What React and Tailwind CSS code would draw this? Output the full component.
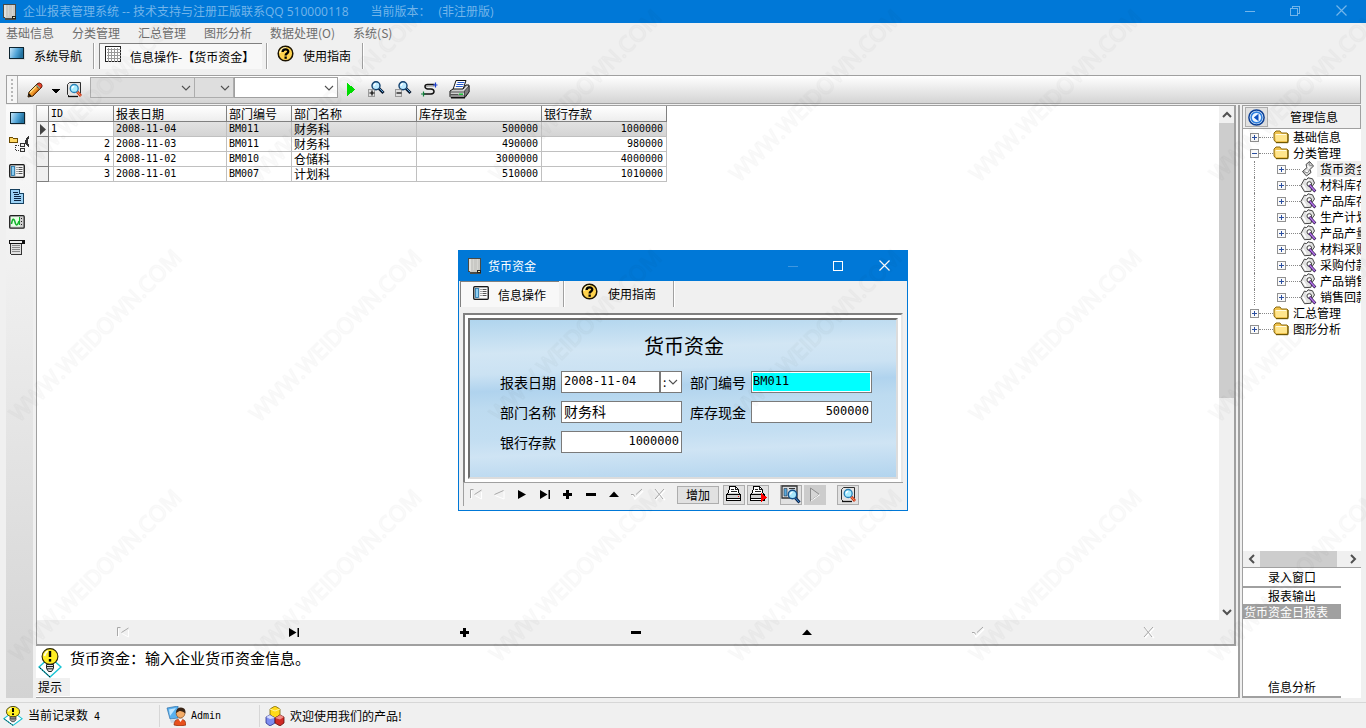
import React from "react";

const Svg = ({ w = 16, h = 16, children, crisp = true }) => (
  <svg width={w} height={h} viewBox={`0 0 ${w} ${h}`} className="block shrink-0" aria-hidden="true" shapeRendering={crisp ? "crispEdges" : "auto"}>
    {children}
  </svg>
);

const BookIcon = () => (
  <Svg>
    <path d="M1 0h13v16H3v-2H1z" fill="#4a4a44" />
    <path d="M2 1h11v11h-1v2H3z" fill="#c9c9c5" />
    <path d="M2 1h2v12H2z" fill="#e0e0dc" />
    <path d="M6 1h1v11H6zM10 1h1v11h-1z" fill="#d5d5d1" />
    <path d="M10 12h4v3h-4z" fill="#222" />
    <path d="M11 13h2v1h-2z" fill="#e8e2b0" />
  </Svg>
);

const ScreenIcon = () => (
  <Svg w={16} h={13}>
    <defs>
      <linearGradient id="scr" x1="0" y1="0" x2="1" y2="0.3">
        <stop offset="0" stopColor="#c5e6fa" />
        <stop offset="0.6" stopColor="#4fa3d6" />
        <stop offset="1" stopColor="#23729f" />
      </linearGradient>
    </defs>
    <rect width="15" height="12" fill="#0d2430" />
    <rect x="1" y="1" width="13" height="10" fill="url(#scr)" />
    <path d="M15 1h1v12H1v-1h14z" fill="#dcdcdc" />
  </Svg>
);

const GridIcon = () => (
  <Svg w={17} h={17}>
    <rect width="16" height="16" fill="#222" />
    <rect x="1" y="1" width="14" height="14" fill="#fff" />
    <path d="M3 1v14M6 1v14M9 1v14M12 1v14M1 3h14M1 6h14M1 9h14M1 12h14" transform="translate(.5 .5)" stroke="#999" />
  </Svg>
);

const HelpIcon = () => (
  <Svg w={17} h={17} crisp={false}>
    <circle cx="8.500" cy="8.500" r="7.300" fill="#ffd34d" stroke="#1a1200" strokeWidth="1.500" />
    <path d="M3 8a5.500 5.500 0 0 1 6-5" stroke="#fff3b8" strokeWidth="1.600" fill="none" />
    <path d="M5.600 7C5.600 3.500 11.400 3.500 11.300 6.600 11.300 8.600 8.600 8.400 8.600 10.400" fill="none" stroke="#000" strokeWidth="2.300" />
    <rect x="7.500" y="11.500" width="2.300" height="2.300" fill="#000" />
  </Svg>
);

const PencilIcon = () => (
  <Svg crisp={false}>
    <path d="M1 15l1-5 8-8q2-2 4 0t0 4l-8 8z" fill="#f29c2c" stroke="#2a1600" />
    <path d="M3 10.500l7-7" stroke="#ffe08a" strokeWidth="1.500" />
    <path d="M6 13l7-7" stroke="#b85e10" strokeWidth="1.200" />
    <circle cx="12.400" cy="3.700" r="2.600" fill="#e8432b" stroke="#5a1208" strokeWidth=".6" />
    <path d="M9.500 3l3.500 3.500" stroke="#7fb08a" strokeWidth="1.200" />
    <path d="M1.500 14.500l.7-3 2.300 2.300z" fill="#111" />
  </Svg>
);

const PreviewIcon = () => (
  <Svg crisp={false}>
    <path d="M3.500 .5h11v11M3.500 .5l-2 2v10l2 2h8" fill="none" stroke="#2d2d2d" />
    <path d="M3.500 1h10.500v12H4l-2-2V2.500z" fill="#e4e4e4" />
    <path d="M2 14.500h10" stroke="#111" strokeWidth="1.300" />
    <path d="M11 9.500l4 4.500" stroke="#c8391d" strokeWidth="2.800" />
    <path d="M11 9.500l3.500 4" stroke="#ff9d60" strokeWidth="1" />
    <circle cx="8.200" cy="6.500" r="4" fill="#a8ecff" stroke="#2882b8" strokeWidth="1.300" />
    <path d="M6.200 6.500q0-2 2-2.300" stroke="#fff" strokeWidth="1.400" fill="none" />
  </Svg>
);

const ZoomGlass = ({ plus }) => (
  <Svg w={17} h={17} crisp={false}>
    <path d="M10.500 7l5 5" stroke="#0b1c33" strokeWidth="3" />
    <path d="M11 7l4 4" stroke="#5aa6e0" strokeWidth="1" />
    <circle cx="8" cy="4.800" r="4" fill="#bdeaff" stroke="#12406e" strokeWidth="1.400" />
    <path d="M6 5q0-2 2-2.300" stroke="#fff" strokeWidth="1.300" fill="none" />
    <path d="M.5 8.500h6v7h-6z" fill="#ddd" stroke="#555" strokeDasharray="1 1" />
    <path d={plus ? "M1.500 12h5M4 9.500v5" : "M1.500 12h5"} stroke="#000" strokeWidth="1.200" />
  </Svg>
);

const RouteIcon = () => (
  <Svg w={17} h={16} crisp={false}>
    <path d="M13.500 2.500H6.500q-2.500 0-2.500 2t2.500 2.500h3.500q3 .3 3 2.500t-3 2.500H3" fill="none" stroke="#111" strokeWidth="1.500" />
    <path d="M13.500 4H7q-1.500 0-1.500 1" fill="none" stroke="#888" />
    <path d="M14.500 .5v5M12 3h4.500" stroke="#1a3ed0" strokeWidth="1.200" />
    <path d="M2.500 9.500v5M0 12h4.500" stroke="#12803c" strokeWidth="1.200" />
  </Svg>
);

const BigPrinter = () => (
  <Svg w={21} h={19} crisp={false}>
    <path d="M7 .5h10l-3 9H4z" fill="#fff" stroke="#111" />
    <path d="M8.500 2.500h7M7.500 4.500h7M6.800 6.500h7" stroke="#2458c8" strokeWidth="1.200" />
    <path d="M1 11l3-2h10l3-4h3v7l-4 5.500H2l-1-1z" fill="#d0d0d0" stroke="#111" />
    <path d="M15.500 11l4.500-5v6l-4.500 5z" fill="#7c7c7c" stroke="#111" strokeWidth=".6" />
    <path d="M1.500 12h14M1.500 14.500h8M1.500 16h14" stroke="#333" strokeWidth=".8" />
    <path d="M2 17.800h14" stroke="#111" strokeWidth="1.400" />
    <rect x="10" y="13.500" width="4" height="1.500" fill="#19c236" />
  </Svg>
);

const SmallPrinter = ({ red }) => (
  <Svg w={18} h={17}>
    <path d="M4.500 .5h6l3 3v4h-10z" fill="#fff" stroke="#000" />
    <path d="M10.500 .5v3h3M5.500 3.500h3M5.500 5.500h6" fill="none" stroke="#222" />
    <path d="M3.500 6.500l-2 2v6h14v-6l-2-2" fill="#cfcfcf" stroke="#000" />
    <path d="M1.500 8.500h14M1.500 12.500h14" stroke="#000" />
    <path d="M2 13.500h13" stroke="#fff" />
    {red ? <path d="M12 7v9l6-4.500z" fill="#f00" /> : <rect x="13" y="10" width="1" height="1" fill="#f00" />}
  </Svg>
);

const FormZoom = () => (
  <Svg w={20} h={19} crisp={false}>
    <path d="M1 1h15v12H1z" fill="#d9dde0" stroke="#333" strokeWidth="1.300" />
    <path d="M3 3.500h3v7.500H3z" fill="#5aa8dc" stroke="#234" strokeWidth=".6" />
    <path d="M8 3.500h6" stroke="#333" />
    <path d="M14 12.500l4.500 5" stroke="#0b2750" strokeWidth="3" />
    <path d="M14.500 13l3.500 4" stroke="#3f8fd8" />
    <circle cx="11.500" cy="9.500" r="4.200" fill="#a6e6fb" stroke="#14508a" strokeWidth="1.400" />
    <path d="M9.500 9.500q0-2 2-2.300" stroke="#fff" strokeWidth="1.300" fill="none" />
  </Svg>
);

const TreeTool = () => (
  <Svg w={21} h={17}>
    <path d="M.5 1.500h3l1 1h4v4h-8z" fill="#ffd864" stroke="#6b4a00" />
    <path d="M6.500 8.500v6h4M6.500 9.500h4" fill="none" stroke="#333" strokeDasharray="1 1" />
    <path d="M11.500 7.500h4v3h-4zM11.500 12.500h4v3h-4z" fill="#eee" stroke="#333" />
    <path d="M20 0q-8 6 0 11v-2q-3-3 0-7z" fill="#333" />
  </Svg>
);

const FormTool = () => (
  <Svg w={17} h={14} crisp={false}>
    <rect x=".7" y=".7" width="14.600" height="12.600" rx="1" fill="#d8d8d8" stroke="#1a1a1a" strokeWidth="1.300" />
    <rect x="2.500" y="2.500" width="3" height="9" fill="#8fd0f4" stroke="#1f6fa5" strokeWidth=".8" />
    <path d="M7 2v10h7V2z" fill="#fafafa" />
    <path d="M7.500 3.500h1M9.500 3.500h4M7.500 5.500h1M9.500 5.500h4M7.500 7.500h1M9.500 7.500h4M7.500 9.500h1M9.500 9.500h4" stroke="#555" />
  </Svg>
);

const DocTool = () => (
  <Svg w={15} h={15}>
    <path d="M.5 .5h9l4 4v10H.5z" fill="#9cd2f6" stroke="#16405f" />
    <path d="M9.500 .5v4h4" fill="#e6f5ff" stroke="#16405f" />
    <path d="M2.500 3.500h5M3.500 5.500h5M3.500 7.500h7M3.500 9.500h7M3.500 11.500h7" stroke="#0c2340" />
  </Svg>
);

const ScopeTool = () => (
  <Svg w={16} h={14} crisp={false}>
    <rect x=".7" y=".7" width="14.500" height="12.500" rx="1" fill="#cfcfcf" stroke="#222" strokeWidth="1.300" />
    <rect x="2" y="2" width="9" height="9.500" fill="#e6ffe6" />
    <path d="M2.500 9c1-6 2.500-6 3.500-2s2.500 4 4-1" fill="none" stroke="#12b32b" strokeWidth="1.500" />
    <path d="M10.500 2v8" stroke="#12b32b" />
    <path d="M12.500 3v1M12.500 6v1M12.500 9v1" stroke="#222" />
  </Svg>
);

const ScrollTool = () => (
  <Svg w={16} h={16}>
    <rect x="0" y="0" width="16" height="4" fill="#111" />
    <rect x="1" y="1" width="12" height="2" fill="#eee" />
    <path d="M1 4h12v11H2v-1H1z" fill="#333" />
    <rect x="2" y="4" width="10" height="10" fill="#e0e0e0" />
    <path d="M3 5.500h8M3 7.500h8M3 9.500h8M3 11.500h8" stroke="#888" />
  </Svg>
);

const FolderIcon = () => (
  <Svg w={17} h={14} crisp={false}>
    <path d="M1 10V3l2-2h4l1.500 2H14l1 1v7l-1 1.500H3z" fill="#f0c24c" stroke="#8a6a10" />
    <path d="M2 5h12v6H3z" fill="#ffe58c" />
    <path d="M2.500 4.500h11" stroke="#fffbe0" />
    <path d="M3 12.700h12V4" stroke="#6b5400" fill="none" />
  </Svg>
);

const BookLeaf = () => (
  <Svg w={17} h={16} crisp={false}>
    <path d="M.8 8.500L4.500 2 6.500 2.800 8 .8l4.500 1L14.500 6 12 9.500l-1 4.800-6.500 .4z" fill="#e2e2e2" stroke="#333" strokeWidth=".9" />
    <path d="M3 8l3 5M6 4.500l3-2" stroke="#fff" strokeWidth="1.500" />
    <circle cx="9.300" cy="7" r="2.300" fill="#fff" stroke="#333" strokeWidth=".9" />
    <path d="M9.300 8l6 6.500" stroke="#2a1448" strokeWidth="2.800" />
    <path d="M9.700 8.300l5.200 5.700" stroke="#b673ec" strokeWidth="1.500" />
  </Svg>
);

const OpenLeaf = () => (
  <Svg w={17} h={16} crisp={false}>
    <path d="M2.500 10.500l4.500-4-1-3L9.500 .5l4 4.500-3.500 3.500 1 3-4.500 3.500z" fill="#dcdcdc" stroke="#333" strokeWidth=".9" />
    <path d="M7.500 5l2 2.500M5.500 10l3 .8" stroke="#fff" strokeWidth="1.400" />
    <path d="M3 10.500l4.500 1.300L10 8.500M9.500 1L9 4l4 1" stroke="#777" fill="none" strokeWidth=".8" />
  </Svg>
);

const BulbIcon = ({ w = 24, h = 30 }) => (
  <svg width={w} height={h} viewBox="0 0 24 30" preserveAspectRatio="none" className="block shrink-0" aria-hidden="true">
    <path d="M1 19l11-10 11 10-11 10z" fill="#fff" stroke="#18c4d4" strokeWidth="1.400" />
    <path d="M12 29L1 19" stroke="#111" strokeDasharray="2 1" />
    <circle cx="12" cy="8.500" r="7.900" fill="#ffee22" stroke="#2b2600" strokeWidth="1.100" />
    <path d="M6.500 8q1-4 3.500-5" stroke="#fffde0" strokeWidth="1.800" fill="none" />
    <path d="M12 3v6" stroke="#000" strokeWidth="2.400" />
    <rect x="10.800" y="11" width="2.400" height="2.600" fill="#000" />
    <path d="M8.500 16.500h7v4l-2 3h-3l-2-3z" fill="#dcdcdc" stroke="#222" />
    <path d="M8.500 18.500h7M9 20.800h6" stroke="#222" />
  </svg>
);

const UserIcon = () => (
  <Svg w={20} h={20} crisp={false}>
    <path d="M1 2l11-2v12l-8 1z" fill="#58b0ee" stroke="#2f6fa8" strokeWidth=".7" />
    <path d="M3 3.500l7-1.500-6 8z" fill="#bfe6ff" />
    <path d="M4 14l6-1 1 3-6 1z" fill="#c9d6e2" />
    <path d="M8 19q0-6 6-6t6 6q-6 2-12 0z" fill="#e8501c" stroke="#8a2c08" strokeWidth=".7" />
    <circle cx="14.500" cy="7.500" r="4.300" fill="#f3ac68" stroke="#8a4a18" strokeWidth=".7" />
    <path d="M10 7q0-5.500 5-5.500t4.500 6q-3-3-6-2.500z" fill="#3a2415" />
    <path d="M12.500 13l2 3 2-3z" fill="#fff" />
  </Svg>
);

const CubesIcon = () => (
  <Svg w={20} h={20} crisp={false}>
    <path d="M5 3l5-3 5 3v6l-5 3-5-3z" fill="#ffd91a" stroke="#7c6400" strokeWidth=".8" />
    <path d="M5 3l5 2 5-2" stroke="#fff3a0" fill="none" />
    <path d="M1 11l4-2 5 3v5l-5 3-4-3z" fill="#7d8df0" stroke="#2a2f88" strokeWidth=".8" />
    <path d="M1 11l4 2 5-1-5-3z" fill="#d5dafd" />
    <path d="M10 12l5-3 4 2v6l-4 3-5-3z" fill="#d02a26" stroke="#5e0c0a" strokeWidth=".8" />
    <path d="M10 12l5 1.500 4-2.500-4-2z" fill="#f28c84" />
  </Svg>
);

const BackIcon = () => (
  <Svg w={17} h={17} crisp={false}>
    <circle cx="8.500" cy="8.500" r="7.600" fill="#fff" stroke="#0b3f96" strokeWidth="1.500" />
    <circle cx="8.500" cy="8.500" r="5.400" fill="#eaf4ff" stroke="#2f80e0" strokeWidth="1.600" />
    <path d="M10.500 4.800v7.400L5.800 8.500z" fill="#0b4fc0" />
  </Svg>
);

const NavGlyph = ({ kind }) => {
  const light = "#a8a8a8";
  const shapes = {
    first: (
      <>
        <path d="M2.500 12V3.500M12.500 5v7L6 8.500" stroke="#fff" fill="none" />
        <path d="M1.500 11V2.500h3M5.500 7.500l7-4.500" stroke={light} fill="none" />
      </>
    ),
    prev: (
      <>
        <path d="M3 8.500l9 3.500V4.500" stroke="#fff" fill="none" />
        <path d="M2.500 7.500l9-4" stroke={light} fill="none" />
      </>
    ),
    next: <path d="M3 3l8 4.500L3 12z" fill="#000" />,
    last: <path d="M2 3l7.500 4.500L2 12zM10.500 3h1.500v9h-1.500z" fill="#000" />,
    add: <path d="M5 3h3v3h3v3H8v3H5V9H2V6h3z" fill="#000" />,
    del: <path d="M2 6h10v3H2z" fill="#000" />,
    edit: <path d="M2 10l5-5.500L12 10z" fill="#000" />,
    post: (
      <>
        <path d="M2 8.500l1-1 2 4.500 8-8" stroke="#fff" fill="none" strokeWidth="1.500" />
        <path d="M1 7.500h2.500l1 2M6 7.500l6-5.500" stroke={light} fill="none" />
      </>
    ),
    cancel: (
      <>
        <path d="M3 3l9 10M12 3l-9 10" stroke="#fff" fill="none" strokeWidth="1.500" />
        <path d="M2 2l8 10M11 2L2 12" stroke={light} fill="none" />
      </>
    ),
  };
  return <Svg w={14} h={15} crisp={["add", "del"].includes(kind)}>{shapes[kind]}</Svg>;
};

const NAV_LABELS = {
  first: "第一条", prev: "上一条", next: "下一条", last: "最后一条", add: "插入",
  del: "删除", edit: "编辑", post: "保存", cancel: "取消",
};

const Chevron = ({ dir = "down", color = "#505050", heavy }) => {
  const d = { down: "M1 3l4 4 4-4", up: "M1 7l4-4 4 4", left: "M7 1L3 5l4 4", right: "M3 1l4 4-4 4" }[dir];
  return (
    <Svg w={10} h={10} crisp={false}>
      <path d={d} fill="none" stroke={color} strokeWidth={heavy ? 2 : 1.1} />
    </Svg>
  );
};

const Combo = ({ label, className }) => (
  <div className={`relative flex h-[21px] items-center border ${className}`}>
    <select aria-label={label} className="h-full w-full appearance-none bg-transparent outline-none" />
    <span className="pointer-events-none absolute right-[3px]">
      <Chevron />
    </span>
  </div>
);

const IconButton = ({ label, className = "", children }) => (
  <button type="button" aria-label={label} className={`flex shrink-0 items-center justify-center ${className}`}>
    {children}
  </button>
);

const Sep = () => <div className="h-full w-[2px] shrink-0 border-l border-[#a0a0a0] bg-white" />;

const MENU = ["基础信息", "分类管理", "汇总管理", "图形分析", "数据处理(O)", "系统(S)"];

const ROWS = [
  ["1", "2008-11-04", "BM011", "财务科", "500000", "1000000"],
  ["2", "2008-11-03", "BM011", "财务科", "490000", "980000"],
  ["4", "2008-11-02", "BM010", "仓储科", "3000000", "4000000"],
  ["3", "2008-11-01", "BM007", "计划科", "510000", "1010000"],
];

const CATEGORY = ["货币资金", "材料库存", "产品库存", "生产计划", "产品产量", "材料采购", "采购付款", "产品销售", "销售回款"];

const mono = "font-['DejaVu_Sans_Mono','Noto_Sans_CJK_SC',monospace]";

const Expander = ({ open }) => (
  <Svg w={9} h={9}>
    <rect x="0" y="0" width="9" height="9" fill="#919191" />
    <rect x="1" y="1" width="7" height="7" fill="#fafafa" />
    <path d={open ? "M2 4.500h5" : "M2 4.500h5M4.500 2v5"} stroke="#2b4fa0" />
  </Svg>
);

const TreeRow = ({ label, open, child, first, selected }) => (
  <li className="flex h-4 items-center">
    {child && <span className="ml-[11px] mr-[22px] h-full w-px shrink-0 border-l border-dotted border-[#888]" />}
    <button type="button" aria-label={`展开${label}`} className={child ? "shrink-0" : "ml-[7px] shrink-0"}>
      <Expander open={open} />
    </button>
    <span className="h-px w-[14px] shrink-0 border-t border-dotted border-[#888]" />
    {child ? first ? <OpenLeaf /> : <BookLeaf /> : <FolderIcon />}
    <span className={`whitespace-nowrap pl-[3px] leading-4 ${selected ? "bg-[#efefef]" : ""}`}>{label}</span>
  </li>
);

const fieldBox = "h-[22px] w-[121px] border border-[#7a7a7a] bg-white px-[2px] pb-[2px] text-black outline-none";

const Field = ({ id, label, children }) => (
  <div className="flex items-center gap-1">
    <label htmlFor={id} className="w-[57px] whitespace-nowrap text-sm leading-5">{label}</label>
    {children}
  </div>
);

function DataForm() {
  return (
    <section
      role="dialog"
      aria-label="货币资金"
      className="absolute left-1/2 top-[250px] w-[450px] -translate-x-1/2 border border-[#0078d7] bg-[#f0f0f0]"
    >
      <header className="flex h-[30px] items-center bg-[#0078d7] pb-px pl-2 text-white">
        <BookIcon />
        <h2 className="ml-[5px] text-xs">货币资金</h2>
        <div className="ml-auto flex h-full">
          <IconButton label="最小化" className="w-[45px]">
            <Svg w={10} h={10}><path d="M0 5.500h10" stroke="#3f97e0" /></Svg>
          </IconButton>
          <IconButton label="最大化" className="w-[46px]">
            <Svg w={10} h={10}><rect x=".5" y=".5" width="9" height="9" fill="none" stroke="#fff" /></Svg>
          </IconButton>
          <IconButton label="关闭" className="w-[46px]">
            <Svg w={11} h={11} crisp={false}><path d="M.5 .5l10 10M10.500 .5l-10 10" stroke="#fff" strokeWidth="1.200" /></Svg>
          </IconButton>
        </div>
      </header>
      <nav className="flex h-[26px] items-stretch text-xs">
        <button type="button" className="ml-px mr-1 flex w-[99px] items-center border-l border-t border-[#808080] bg-[#f8f8f8] pb-[3px] pl-3">
          <FormTool />
          <span className="ml-2 pt-[3px]">信息操作</span>
        </button>
        <Sep />
        <button type="button" className="flex w-[108px] items-center pb-[3px] pl-4">
          <span className="mb-[3px]"><HelpIcon /></span>
          <span className="ml-[10px] pt-[3px]">使用指南</span>
        </button>
        <Sep />
      </nav>
      <div className="mx-1 mt-[6px] border-2 border-b-0 border-[#808080] border-r-[#e8e8e8] bg-white p-[3px]">
        <form className="h-[161px] border-2 border-[#6e6e6e] border-b-[#dcdcdc] border-r-[#dcdcdc] bg-[linear-gradient(178deg,#b0d5ee_0%,#d2e6f4_20%,#cbe2f3_32%,#b0d3ee_42%,#bddbf0_52%,#c3def2_70%,#cfe4f4_80%,#b2d4ee_100%)] pt-[11px]">
          <h3 className="pl-[2px] text-center text-xl leading-[30px] text-black">货币资金</h3>
          <div className="mt-[10px] grid grid-cols-[182px_182px] gap-2 pl-[30px]">
            <Field id="f-date" label="报表日期">
              <div className="flex w-[121px]">
                <input id="f-date" defaultValue="2008-11-04" className={`h-[22px] w-[99px] border border-[#7a7a7a] bg-white px-[2px] pb-[2px] text-xs outline-none ${mono}`} />
                <button type="button" aria-label="选择日期" className="flex h-[22px] w-[22px] items-center justify-between border border-[#7a7a7a] bg-white pl-[2px] pr-[3px] text-xs leading-none">
                  <span>:</span>
                  <Chevron />
                </button>
              </div>
            </Field>
            <Field id="f-code" label="部门编号">
              <input id="f-code" defaultValue="BM011" className={`h-[22px] w-[121px] border border-[#7a7a7a] bg-[#00ffff] px-px pb-[2px] text-xs shadow-[inset_0_0_0_1px_#fff] outline-none ${mono}`} />
            </Field>
            <Field id="f-name" label="部门名称">
              <input id="f-name" defaultValue="财务科" className={`${fieldBox} text-sm`} />
            </Field>
            <Field id="f-cash" label="库存现金">
              <input id="f-cash" defaultValue="500000" className={`${fieldBox} text-right text-xs ${mono}`} />
            </Field>
            <Field id="f-bank" label="银行存款">
              <input id="f-bank" defaultValue="1000000" className={`${fieldBox} text-right text-xs ${mono}`} />
            </Field>
          </div>
        </form>
      </div>
      <div className="mx-1 mb-1 flex h-6 items-center border-l border-t border-[#a0a0a0]">
        {Object.keys(NAV_LABELS).map((k) => (
          <IconButton key={k} label={NAV_LABELS[k]} className="h-5 w-[23px]"><NavGlyph kind={k} /></IconButton>
        ))}
        <button type="button" className="ml-[6px] h-[18px] w-[42px] border border-[#adadad] bg-[#e1e1e1] text-xs leading-4">增加</button>
        <IconButton label="打印" className="ml-1 h-5 w-[22px] border border-[#adadad] bg-[#e1e1e1]"><SmallPrinter /></IconButton>
        <IconButton label="输出打印" className="ml-[2px] h-5 w-[22px] border border-[#adadad] bg-[#e1e1e1]"><SmallPrinter red /></IconButton>
        <IconButton label="查询" className="ml-[11px] h-5 w-[22px] border border-[#adadad] bg-[#e1e1e1]"><FormZoom /></IconButton>
        <IconButton label="执行" className="ml-[2px] h-5 w-[22px] bg-[#cccccc]">
          <Svg w={12} h={15} crisp={false}><path d="M1.500 1v13l9-6.500z" fill="#d6d6d6" stroke="#8c8c8c" /><path d="M2 14l9-6.500" stroke="#fff" /></Svg>
        </IconButton>
        <IconButton label="预览" className="ml-[11px] h-5 w-[22px] border border-[#adadad] bg-[#e1e1e1]"><PreviewIcon /></IconButton>
      </div>
    </section>
  );
}

const Watermark = () => (
  <svg className="pointer-events-none absolute inset-0 h-full w-full" aria-hidden="true">
    <defs>
      <pattern id="wm" width="240" height="240" patternUnits="userSpaceOnUse" y="180">
        <g fill="none" stroke="#000" strokeOpacity=".026" strokeWidth="1.500" fontFamily="Open Sans, sans-serif" fontSize="22">
          <text transform="translate(19 243) rotate(-45)">WWW.WEIDOWN.COM</text>
          <text transform="translate(19 3) rotate(-45)">WWW.WEIDOWN.COM</text>
        </g>
      </pattern>
    </defs>
    <rect width="100%" height="100%" fill="url(#wm)" />
  </svg>
);

export default function App() {
  return (
    <div className="relative flex min-h-screen flex-col overflow-hidden bg-[#f0f0f0] font-['Noto_Sans_CJK_SC',sans-serif] text-xs text-black">
      <header className="flex h-[23px] items-center bg-[#0078d7] pl-[2px] text-[#73b5ea]">
        <BookIcon />
        <h1 className="ml-[5px] flex gap-[22px] font-['Open_Sans','Noto_Sans_CJK_SC',sans-serif] text-xs leading-[23px]">
          <span>企业报表管理系统 -- 技术支持与注册正版联系QQ 510000118</span>
          <span className="flex gap-2"><span>当前版本：</span><span>(非注册版)</span></span>
        </h1>
        <div className="ml-auto flex h-full items-center pb-[2px]">
          <IconButton label="最小化" className="h-full w-[45px]">
            <Svg w={10} h={10}><path d="M0 5.500h10" stroke="#73b5ea" /></Svg>
          </IconButton>
          <IconButton label="还原" className="h-full w-[46px]">
            <Svg w={10} h={10}><path d="M.5 2.500h7v7h-7zM2.500 2V.5h7v7H8" fill="none" stroke="#73b5ea" /></Svg>
          </IconButton>
          <IconButton label="关闭" className="mr-[2px] h-full w-[46px]">
            <Svg w={11} h={11} crisp={false}><path d="M.5 .5l10 10M10.500 .5l-10 10" stroke="#73b5ea" strokeWidth="1.200" /></Svg>
          </IconButton>
        </div>
      </header>

      <nav className="flex h-5 items-center gap-[18px] pl-[6px] text-[#6d6d6d]">
        {MENU.map((m) => (
          <button type="button" key={m} className="whitespace-nowrap leading-5">{m}</button>
        ))}
      </nav>

      <div className="flex h-[26px] shrink-0 pl-[9px]">
        <button type="button" className="flex w-[84px] items-center">
          <span className="mb-[6px]"><ScreenIcon /></span>
          <span className="ml-[9px]">系统导航</span>
        </button>
        <Sep />
        <button type="button" className="mx-[4px] flex w-[163px] items-center border-l border-t border-[#808080] bg-[#f8f8f8] pl-[5px]">
          <span className="mb-1"><GridIcon /></span>
          <span className="ml-2 whitespace-nowrap">信息操作-【货币资金】</span>
        </button>
        <Sep />
        <button type="button" className="flex w-[94px] items-center pl-[9px]">
          <span className="mb-[6px]"><HelpIcon /></span>
          <span className="ml-[9px]">使用指南</span>
        </button>
        <Sep />
      </div>

      <div className="ml-[6px] mr-[5px] mt-[6px] flex h-[29px] shrink-0 items-center border border-[#a0a0a0] bg-linear-to-b from-white to-[#d4d4d4]">
        <div className="mr-[9px] flex h-full w-[11px] flex-col items-center justify-center border-r border-[#b0b0b0] bg-[#f6f6f6]">
          <span className="h-[22px] border-l-2 border-dotted border-[#b8b8b8]" />
        </div>
        <IconButton label="编辑"><PencilIcon /></IconButton>
        <IconButton label="更多" className="ml-[9px] mt-1"><Svg w={8} h={5}><path d="M0 0h8L4 4.500z" fill="#000" /></Svg></IconButton>
        <IconButton label="预览" className="ml-[6px]"><PreviewIcon /></IconButton>
        <div className="ml-2 flex pb-1">
          <Combo label="字段" className="w-[105px] border-[#adadad] bg-[#dedede]" />
          <Combo label="条件" className="w-[39px] border-l-0 border-[#adadad] bg-[#dedede]" />
          <Combo label="值" className="w-[104px] border-[#a0a0a0] bg-white" />
        </div>
        <IconButton label="执行" className="ml-[9px]"><Svg w={9} h={13}><path d="M0 0l8.500 6.500L0 13z" fill="#00e000" /></Svg></IconButton>
        <IconButton label="放大" className="ml-3"><ZoomGlass plus /></IconButton>
        <IconButton label="缩小" className="ml-[10px]"><ZoomGlass /></IconButton>
        <IconButton label="刷新" className="ml-[9px]"><RouteIcon /></IconButton>
        <IconButton label="打印" className="ml-[11px]"><BigPrinter /></IconButton>
      </div>

      <div className="mt-px flex flex-1 pl-[6px] pr-[5px]">
        <aside className="mr-[3px] flex w-[27px] flex-col items-start gap-[11px] bg-linear-to-b from-[#fbfbfb] to-[#d3d3d3] pl-[3px] pt-[7px]">
          <IconButton label="系统导航" className="ml-px"><ScreenIcon /></IconButton>
          <IconButton label="结构"><TreeTool /></IconButton>
          <IconButton label="表单"><FormTool /></IconButton>
          <IconButton label="文档" className="ml-px"><DocTool /></IconButton>
          <IconButton label="图形"><ScopeTool /></IconButton>
          <IconButton label="报表"><ScrollTool /></IconButton>
        </aside>

        <main className="flex min-w-0 flex-1 flex-col border-r-2 border-[#a0a0a0]">
          <div className="mr-[2px] flex flex-1 flex-col border-b-2 border-l border-r-2 border-t border-[#a0a0a0] bg-white">
            <div className="flex flex-1">
              <div className="min-w-0 flex-1">
                <table className="w-[630px] table-fixed border-separate border-spacing-0">
                  <colgroup>
                    <col className="w-[12px]" />
                    <col className="w-[65px]" />
                    <col className="w-[113px]" />
                    <col className="w-[65px]" />
                    <col className="w-[125px]" />
                    <col className="w-[125px]" />
                    <col className="w-[125px]" />
                  </colgroup>
                  <thead>
                    <tr className="bg-linear-to-b from-white to-[#ececec]">
                      {["", "ID", "报表日期", "部门编号", "部门名称", "库存现金", "银行存款"].map((h, i) => (
                        <th key={i} className={`h-4 border-b border-r border-[#808080] p-0 pl-[2px] text-left font-normal leading-[15px] ${h === "ID" ? `text-[10px] ${mono}` : ""}`}>{h}</th>
                      ))}
                    </tr>
                  </thead>
                  <tbody>
                    {ROWS.map((r, ri) => (
                      <tr key={ri}>
                        <td className="h-[15px] border-b border-r border-[#808080] bg-[#f0f0f0] p-0 pl-[3px]">
                          {ri === 0 && <Svg w={6} h={11} crisp={false}><path d="M0 0v11l6-5.500z" fill="#444" /></Svg>}
                        </td>
                        {r.map((c, ci) => {
                          const right = (ci === 0 && ri > 0) || ci > 3;
                          return (
                            <td
                              key={ci}
                              className={`h-[15px] border-b border-r border-[#c0c0c0] p-0 leading-[14px] ${right ? "pr-[3px] text-right" : "pl-[2px] text-left"} ${ci === 3 ? "" : `text-[10px] ${mono}`} ${ri === 0 && ci > 0 ? "bg-linear-to-b from-[#e2e2e2] to-[#d4d4d4]" : ""}`}
                            >
                              {c}
                            </td>
                          );
                        })}
                      </tr>
                    ))}
                  </tbody>
                </table>
              </div>
              <div className="flex w-[15px] flex-col items-center bg-[#f0f0f0]">
                <IconButton label="向上滚动" className="h-[17px] w-full"><Chevron dir="up" heavy /></IconButton>
                <div className="w-full grow-[276] bg-[#cdcdcd]" />
                <div className="grow-[205]" />
                <IconButton label="向下滚动" className="h-[17px] w-full"><Chevron heavy /></IconButton>
              </div>
            </div>
            <div className="grid h-6 grid-cols-7 items-center bg-[#f0f0f0]">
              {["first", "last", "add", "del", "edit", "post", "cancel"].map((k) => (
                <IconButton key={k} label={NAV_LABELS[k]} className="h-full"><NavGlyph kind={k} /></IconButton>
              ))}
            </div>
          </div>
          <div className="flex h-[52px] border-b border-[#a0a0a0] bg-white">
            <div className="flex w-[34px] flex-col pt-[2px]">
              <span className="pl-[2px]"><BulbIcon /></span>
              <span className="w-full bg-[#f0f0f0] pl-[2px] leading-[18px]">提示</span>
            </div>
            <p className="text-[15px] leading-6">货币资金：输入企业货币资金信息。</p>
          </div>
        </main>

        <aside className="ml-[2px] flex w-[119px] shrink-0 flex-col overflow-hidden border-l border-[#a0a0a0] bg-white">
          <div className="flex h-6 items-center border border-l-0 border-[#a0a0a0] bg-[#f0f0f0]">
            <IconButton label="返回" className="ml-[2px] h-5 w-[23px] border border-[#adadad] bg-[#e1e1e1]"><BackIcon /></IconButton>
            <h2 className="flex-1 text-center text-xs">管理信息</h2>
          </div>
          <ul className="flex-1 overflow-hidden">
            <TreeRow label="基础信息" />
            <TreeRow label="分类管理" open />
            {CATEGORY.map((c, i) => (
              <TreeRow key={c} label={c} child first={i === 0} selected={i === 0} />
            ))}
            <TreeRow label="汇总管理" />
            <TreeRow label="图形分析" />
          </ul>
          <div className="flex h-[17px] items-stretch border-b border-[#a0a0a0] bg-[#f0f0f0]">
            <IconButton label="向左滚动" className="w-[17px]"><Chevron dir="left" heavy /></IconButton>
            <div className="w-[77px] bg-[#cdcdcd]" />
            <IconButton label="向右滚动" className="ml-auto w-[17px]"><Chevron dir="right" heavy /></IconButton>
          </div>
          <div className="flex h-[130px] w-[98px] flex-col">
            <button type="button" className="h-5 border-b-2 border-[#a0a0a0] leading-[18px]">录入窗口</button>
            <button type="button" className="h-4 leading-4">报表输出</button>
            <a href="#daily" className="block whitespace-nowrap bg-[#a0a0a0] pl-px leading-[15px] text-white">货币资金日报表</a>
            <button type="button" className="mt-auto h-5 border-b-2 border-[#a0a0a0] leading-[18px]">信息分析</button>
          </div>
        </aside>
      </div>

      <footer className="mt-[4px] flex h-[26px] items-center border-t border-[#d7d7d7]">
        <div className="flex w-[159px] items-center gap-[5px] pl-[3px]">
          <BulbIcon w={20} h={20} />
          <span>当前记录数<span className={`ml-[6px] text-[10px] ${mono}`}>4</span></span>
        </div>
        <div className={`flex h-[22px] w-[100px] items-center gap-[5px] border-l border-[#d7d7d7] pl-[6px] text-[10px] ${mono}`}>
          <UserIcon />
          <span>Admin</span>
        </div>
        <div className="flex h-[22px] flex-1 items-center gap-[5px] border-l border-[#d7d7d7] pl-[5px]">
          <CubesIcon />
          <span>欢迎使用我们的产品!</span>
        </div>
      </footer>

      <DataForm />
      <Watermark />
    </div>
  );
}
